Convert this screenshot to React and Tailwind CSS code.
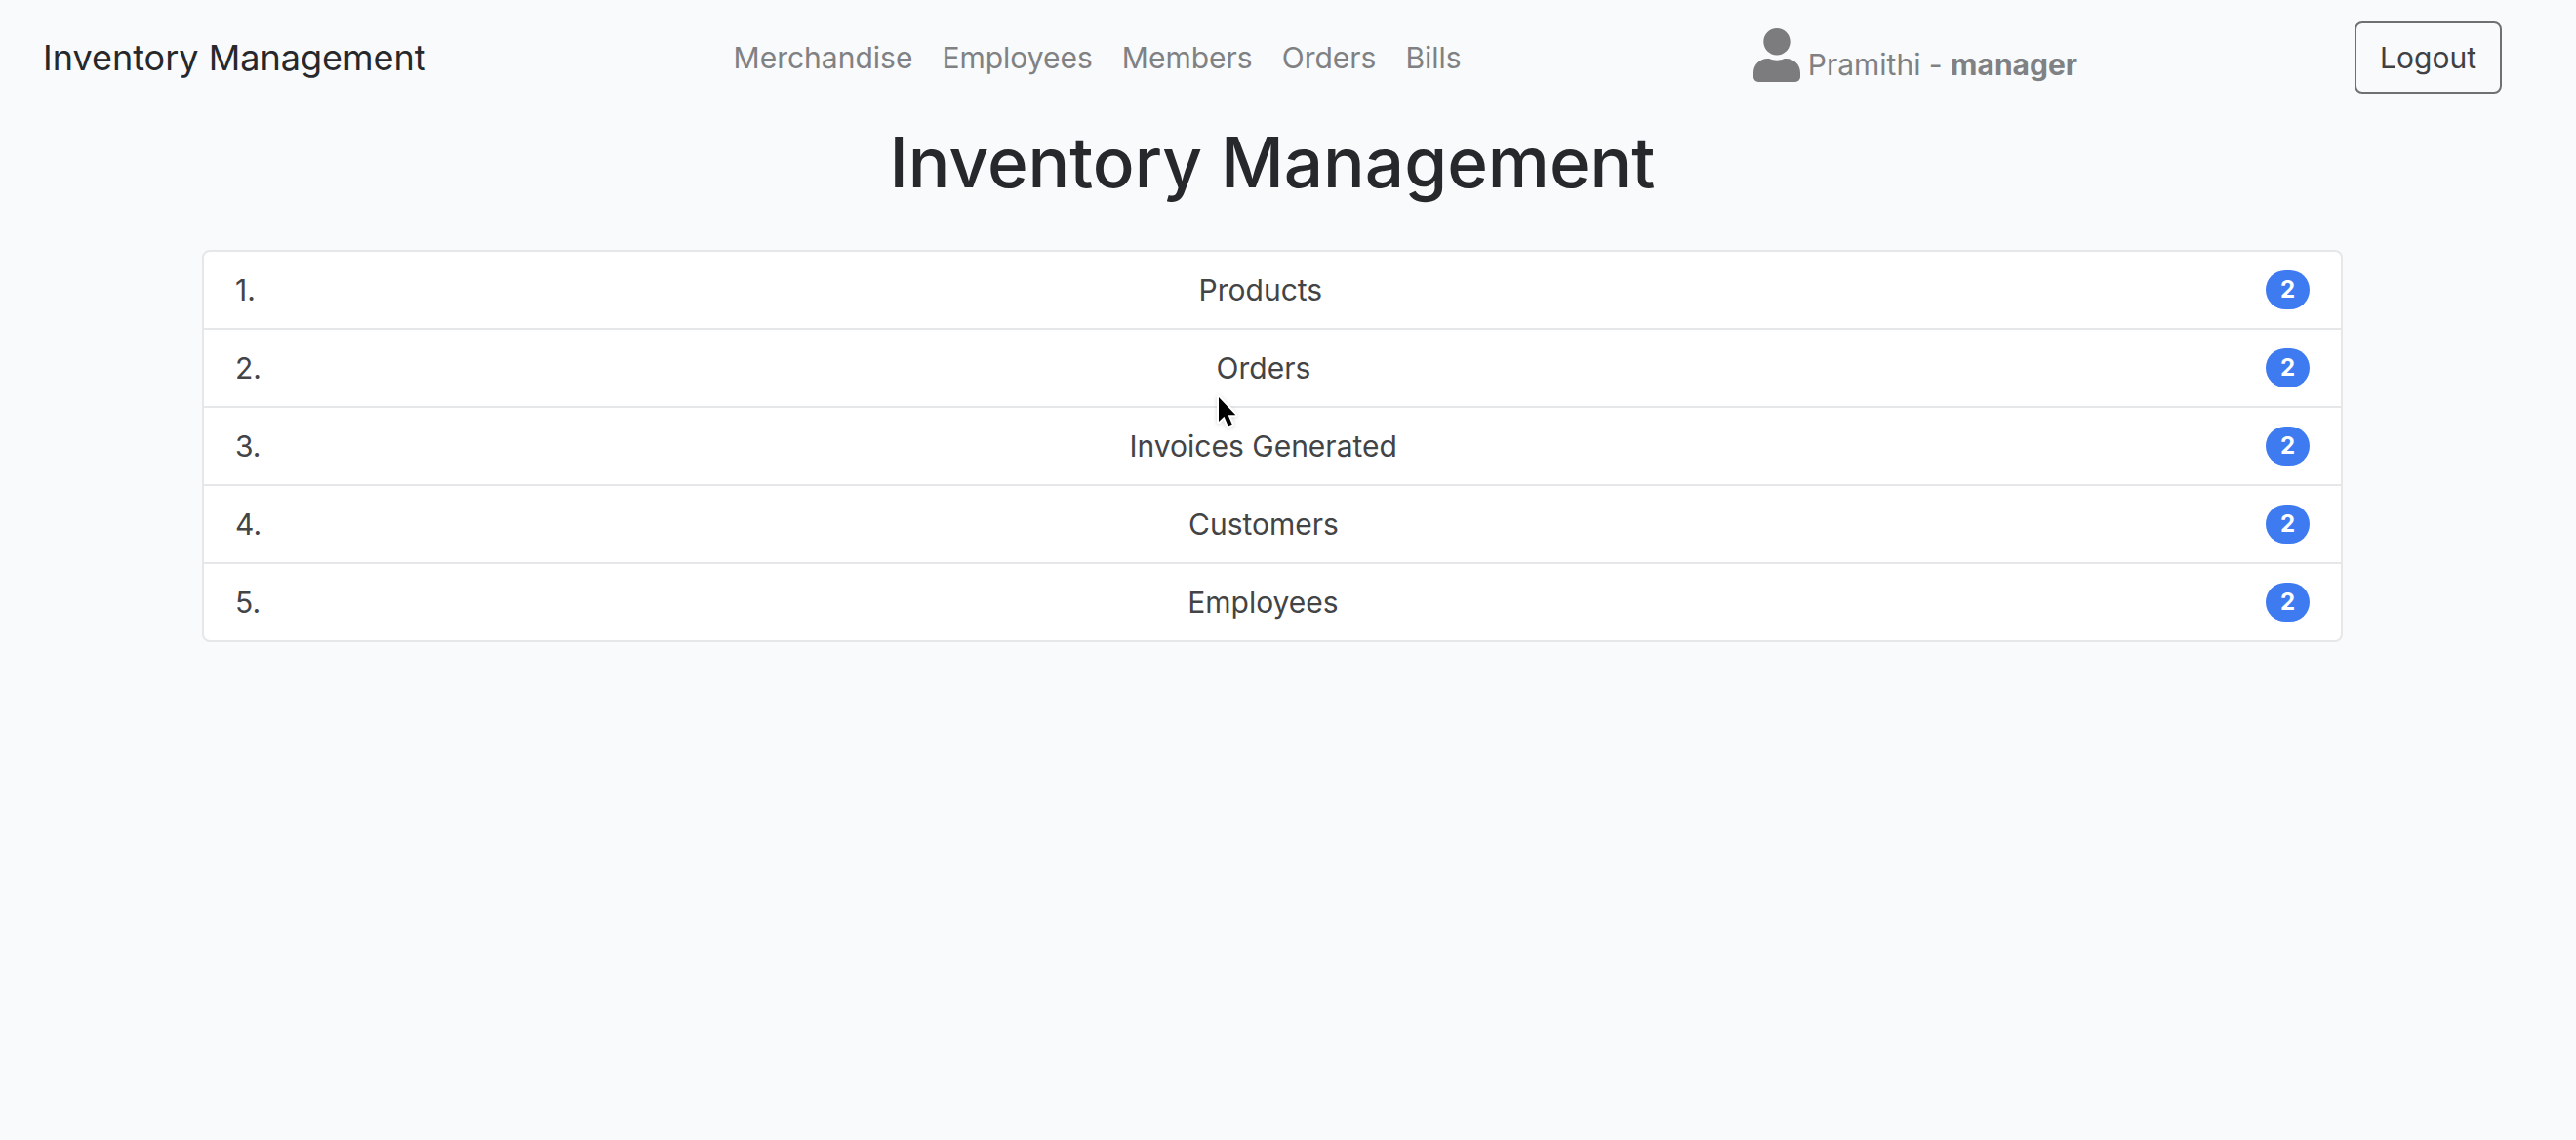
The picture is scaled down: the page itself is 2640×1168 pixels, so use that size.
import React from "react";
import { FaUser } from "react-icons/fa";

const links = ["Merchandise", "Employees", "Members", "Orders", "Bills"];

const rows = [
  { label: "Products", count: 2 },
  { label: "Orders", count: 2 },
  { label: "Invoices Generated", count: 2 },
  { label: "Customers", count: 2 },
  { label: "Employees", count: 2 },
];

function Navbar() {
  return (
    <header className="flex items-center justify-between pt-[22px] pr-3 pb-[22px] pl-11">
      <a href="#home" className="mr-8 text-[36px] leading-[60px] text-[#26282b]">
        Inventory Management
      </a>
      <nav className="flex text-[30px] leading-12 text-[#808183]">
        {links.map((link) => (
          <a key={link} href={"#" + link.toLowerCase()} className="px-[15px]">
            {link}
          </a>
        ))}
      </nav>
      <div className="flex items-end gap-2 px-4 text-[30px] leading-12 text-[#808183]">
        <FaUser className="mb-1.5 h-[55px] w-12 text-[#7c7c7e]" aria-hidden="true" />
        <span>
          Pramithi - <b className="font-bold">manager</b>
        </span>
      </div>
      <button
        type="button"
        className="rounded-lg border-2 border-[#6f7072] px-6 py-[11px] text-[30px] leading-12 text-[#3f4144]"
      >
        Logout
      </button>
    </header>
  );
}

function Pointer() {
  return (
    <svg
      viewBox="0 0 24 36"
      className="absolute top-[403px] left-[1246px] h-9 w-6 overflow-visible drop-shadow-sm"
      aria-hidden="true"
    >
      <path
        d="M3 4v25l5.500-5.200 4.200 9.700 4-1.800-4.100-9.500h7.700z"
        fill="#000"
        stroke="#fff"
        strokeWidth="4"
        strokeLinejoin="round"
        paintOrder="stroke"
      />
    </svg>
  );
}

export default function App() {
  return (
    <div className="relative min-h-screen bg-[#f8fafc] pr-8 font-['Inter',sans-serif]">
      <div className="pr-8">
        <Navbar />
      </div>
      <main className="px-[207px]">
        <h1 className="text-center text-[71px] leading-[96px] font-medium text-[#26282b]">
          Inventory Management
        </h1>
        <ol className="mt-[42px] divide-y-2 divide-[#e6e7e9] rounded-lg border-2 border-[#e6e7e9] bg-white text-[30px] leading-12 text-[#434446]">
          {rows.map((row, i) => (
            <li key={row.label} className="flex items-center px-8 py-[15px]">
              <span>{i + 1}.</span>
              <span className="flex-1 text-center">{row.label}</span>
              <span className="rounded-full bg-[#3e7bf1] px-[15px] py-2 text-2xl leading-6 font-bold text-white">
                {row.count}
              </span>
            </li>
          ))}
        </ol>
      </main>
      <Pointer />
    </div>
  );
}
